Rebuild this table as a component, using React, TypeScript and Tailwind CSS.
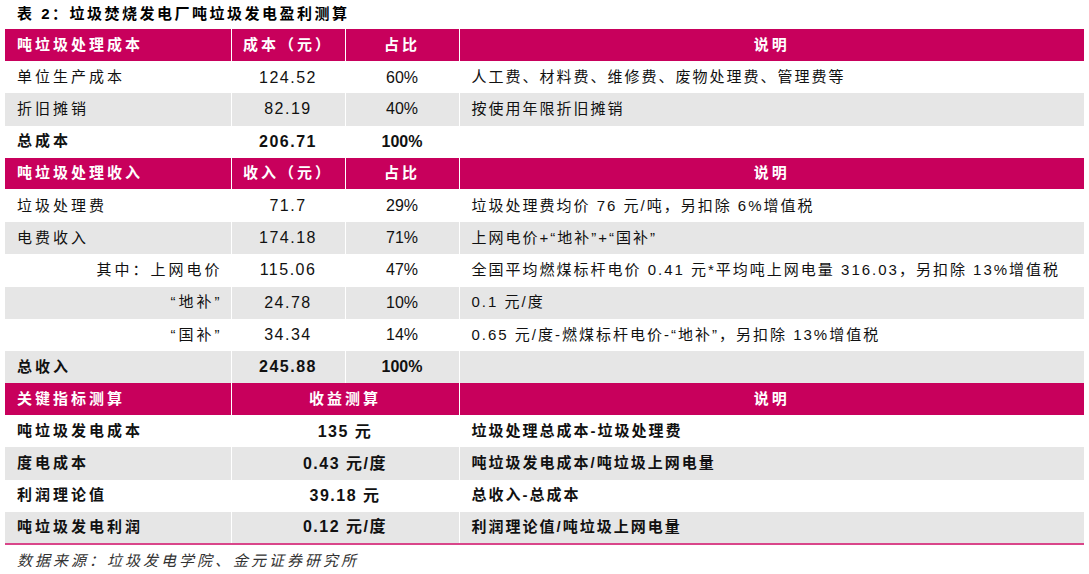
const FONT = "font-['Liberation_Sans','Noto_Sans_CJK_SC',sans-serif]";

type Row = {
  kind: "head" | "data";
  cells: string[];
  bold?: boolean;
  indent?: boolean;
};

const rows: Row[] = [
  { kind: "head", cells: ["吨垃圾处理成本", "成本（元）", "占比", "说明"] },
  { kind: "data", cells: ["单位生产成本", "124.52", "60%", "人工费、材料费、维修费、废物处理费、管理费等"] },
  { kind: "data", cells: ["折旧摊销", "82.19", "40%", "按使用年限折旧摊销"] },
  { kind: "data", cells: ["总成本", "206.71", "100%", ""], bold: true },
  { kind: "head", cells: ["吨垃圾处理收入", "收入（元）", "占比", "说明"] },
  { kind: "data", cells: ["垃圾处理费", "71.7", "29%", "垃圾处理费均价 76 元/吨，另扣除 6%增值税"] },
  { kind: "data", cells: ["电费收入", "174.18", "71%", "上网电价+“地补”+“国补”"] },
  { kind: "data", cells: ["其中：上网电价", "115.06", "47%", "全国平均燃煤标杆电价 0.41 元*平均吨上网电量 316.03，另扣除 13%增值税"], indent: true },
  { kind: "data", cells: ["“地补”", "24.78", "10%", "0.1 元/度"], indent: true },
  { kind: "data", cells: ["“国补”", "34.34", "14%", "0.65 元/度-燃煤标杆电价-“地补”，另扣除 13%增值税"], indent: true },
  { kind: "data", cells: ["总收入", "245.88", "100%", ""], bold: true },
  { kind: "head", cells: ["关键指标测算", "收益测算", "", "说明"] },
  { kind: "data", cells: ["吨垃圾发电成本", "135 元", "", "垃圾处理总成本-垃圾处理费"], bold: true },
  { kind: "data", cells: ["度电成本", "0.43 元/度", "", "吨垃圾发电成本/吨垃圾上网电量"], bold: true },
  { kind: "data", cells: ["利润理论值", "39.18 元", "", "总收入-总成本"], bold: true },
  { kind: "data", cells: ["吨垃圾发电利润", "0.12 元/度", "", "利润理论值/吨垃圾上网电量"], bold: true },
];

export default function App() {
  let dataIndex = 0;
  return (
    <div className={`w-[1089px] h-[574px] bg-white text-[#111] ${FONT}`}>
      <div className="h-[29px] pl-[17px] flex items-center text-[15px] font-bold tracking-[2.5px] text-black">
        表 2：垃圾焚烧发电厂吨垃圾发电盈利测算
      </div>
      <table className="ml-[5px] w-[1079px] table-fixed border-collapse border-b-2 border-[#d9468a]">
        <colgroup>
          <col className="w-[226px]" />
          <col className="w-[114px]" />
          <col className="w-[114px]" />
          <col className="w-[625px]" />
        </colgroup>
        <tbody>
          {rows.map((r, i) => {
            if (r.kind === "head") {
              dataIndex = 0;
              const merged = r.cells[2] === "";
              return (
                <tr key={i} className="h-[32.2px] bg-[#c8005c] text-white font-bold text-[15px]">
                  <td className="border border-white border-t-0 border-l-0 pl-[12px] tracking-[3px]">{r.cells[0]}</td>
                  {merged ? (
                    <td colSpan={2} className="border border-white border-t-0 text-center tracking-[3px]">{r.cells[1]}</td>
                  ) : (
                    <>
                      <td className="border border-white border-t-0 text-center tracking-[3px]">{r.cells[1]}</td>
                      <td className="border border-white border-t-0 text-center tracking-[3px]">{r.cells[2]}</td>
                    </>
                  )}
                  <td className="border border-white border-t-0 border-r-0 text-center tracking-[3px]">{r.cells[3]}</td>
                </tr>
              );
            }
            const gray = dataIndex % 2 === 1;
            dataIndex++;
            const merged = r.cells[2] === "" && r.cells[1].includes("元");
            const bg = gray ? "bg-[#e6e6e6]" : "bg-white";
            const weight = r.bold ? "font-bold" : "font-normal";
            return (
              <tr key={i} className={`h-[32.2px] ${bg} ${weight} text-[15px]`}>
                <td className={`border-r border-white ${r.indent ? "text-right pr-[8px]" : "pl-[12px]"} tracking-[3px]`}>
                  {r.cells[0]}
                </td>
                {merged ? (
                  <td colSpan={2} className="border-r border-white text-center text-[16px] tracking-[1.5px]">{r.cells[1]}</td>
                ) : (
                  <>
                    <td className="border-r border-white text-center text-[16px] tracking-[1.5px]">{r.cells[1]}</td>
                    <td className="border-r border-white text-center text-[16px]">{r.cells[2]}</td>
                  </>
                )}
                <td className="pl-[12px] tracking-[2px] whitespace-nowrap">{r.cells[3]}</td>
              </tr>
            );
          })}
        </tbody>
      </table>
      <div className="pl-[17px] pt-[5px] text-[15px] italic tracking-[3px] text-[#333]">
        数据来源：垃圾发电学院、金元证券研究所
      </div>
    </div>
  );
}
